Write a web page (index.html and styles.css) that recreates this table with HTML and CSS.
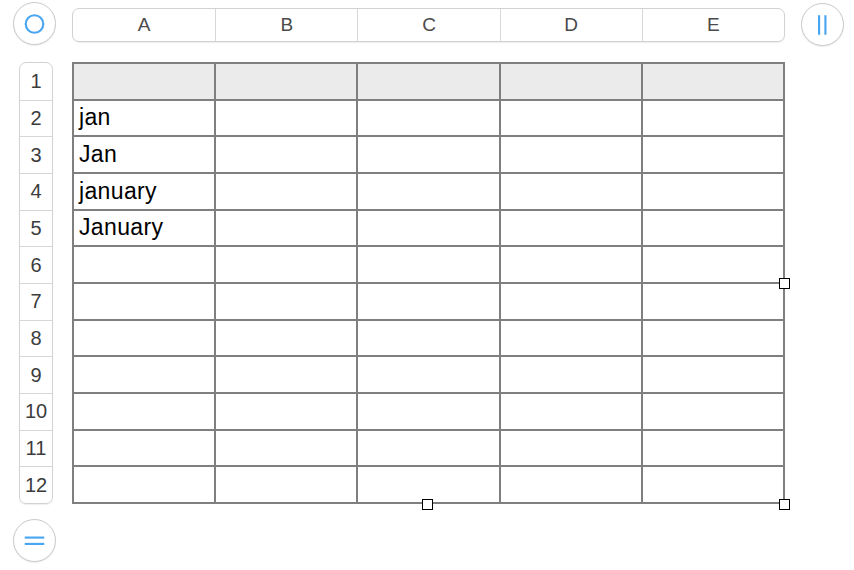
FILE: index.html
```html
<!DOCTYPE html>
<html>
<head>
<meta charset="utf-8">
<link rel="stylesheet" href="styles.css">
</head>
<body>
<div class="page">
  <div class="top">
    <div class="circle-btn">
      <svg width="42" height="42" viewBox="0 0 42 42"><circle cx="21" cy="21" r="9" fill="none" stroke="#4aa6f0" stroke-width="2.2"/></svg>
    </div>
    <div class="col-bar">
      <div class="col-h">A</div>
      <div class="col-h">B</div>
      <div class="col-h">C</div>
      <div class="col-h">D</div>
      <div class="col-h">E</div>
    </div>
    <div class="circle-btn right">
      <svg width="42" height="42" viewBox="0 0 42 42"><line x1="17.5" y1="11" x2="17.5" y2="31" stroke="#4aa6f0" stroke-width="2.2"/><line x1="24" y1="11" x2="24" y2="31" stroke="#4aa6f0" stroke-width="2.2"/></svg>
    </div>
  </div>
  <div class="middle">
    <div class="row-bar">
      <div class="row-h">1</div>
      <div class="row-h">2</div>
      <div class="row-h">3</div>
      <div class="row-h">4</div>
      <div class="row-h">5</div>
      <div class="row-h">6</div>
      <div class="row-h">7</div>
      <div class="row-h">8</div>
      <div class="row-h">9</div>
      <div class="row-h">10</div>
      <div class="row-h">11</div>
      <div class="row-h">12</div>
    </div>
    <div class="sheet-wrap">
      <div class="sheet">
        <div class="cell head"></div><div class="cell head"></div><div class="cell head"></div><div class="cell head"></div><div class="cell head"></div>
        <div class="cell">jan</div><div class="cell"></div><div class="cell"></div><div class="cell"></div><div class="cell"></div>
        <div class="cell">Jan</div><div class="cell"></div><div class="cell"></div><div class="cell"></div><div class="cell"></div>
        <div class="cell">january</div><div class="cell"></div><div class="cell"></div><div class="cell"></div><div class="cell"></div>
        <div class="cell">January</div><div class="cell"></div><div class="cell"></div><div class="cell"></div><div class="cell"></div>
        <div class="cell"></div><div class="cell"></div><div class="cell"></div><div class="cell"></div><div class="cell"></div>
        <div class="cell"></div><div class="cell"></div><div class="cell"></div><div class="cell"></div><div class="cell"></div>
        <div class="cell"></div><div class="cell"></div><div class="cell"></div><div class="cell"></div><div class="cell"></div>
        <div class="cell"></div><div class="cell"></div><div class="cell"></div><div class="cell"></div><div class="cell"></div>
        <div class="cell"></div><div class="cell"></div><div class="cell"></div><div class="cell"></div><div class="cell"></div>
        <div class="cell"></div><div class="cell"></div><div class="cell"></div><div class="cell"></div><div class="cell"></div>
        <div class="cell"></div><div class="cell"></div><div class="cell"></div><div class="cell"></div><div class="cell"></div>
      </div>
      <div class="handle h-right"></div>
      <div class="handle h-bottom"></div>
      <div class="handle h-corner"></div>
    </div>
  </div>
  <div class="bottom">
    <div class="circle-btn">
      <svg width="42" height="42" viewBox="0 0 42 42"><line x1="11" y1="17.5" x2="31" y2="17.5" stroke="#4aa6f0" stroke-width="2.2"/><line x1="11" y1="24" x2="31" y2="24" stroke="#4aa6f0" stroke-width="2.2"/></svg>
    </div>
  </div>
</div>
</body>
</html>
```
FILE: styles.css
```css
* { box-sizing: border-box; }
html, body { margin: 0; padding: 0; background: #fff; }
body { font-family: "Liberation Sans", Arial, sans-serif; width: 854px; height: 570px; overflow: hidden; }

.page { padding: 2px 0 0 13px; }

.top { display: flex; align-items: flex-start; }

.circle-btn {
  width: 43px; height: 43px;
  border-radius: 50%;
  border: 1px solid #c9c9c9;
  box-shadow: 0 1px 1px rgba(0,0,0,0.08);
  background: #fff;
  display: flex; align-items: center; justify-content: center;
  flex: none;
}
.circle-btn svg { display: block; }
.circle-btn.right { margin-left: 16px; margin-top: 1px; }

.col-bar {
  margin-left: 16px;
  margin-top: 6px;
  width: 713px; height: 34px;
  border: 1px solid #d2d2d2;
  border-radius: 7px;
  box-shadow: 0 1px 1px rgba(0,0,0,0.07);
  display: grid;
  grid-template-columns: repeat(5, 1fr);
}
.col-h {
  display: flex; align-items: center; justify-content: center;
  font-size: 19px; color: #4a4a4a;
  border-left: 1px solid #d8d8d8;
}
.col-h:first-child { border-left: none; }

.middle { display: flex; margin-top: 16px; }

.row-bar {
  margin-left: 6px;
  width: 34px; height: 442px;
  border: 1px solid #d2d2d2;
  border-radius: 7px;
  box-shadow: 0 1px 1px rgba(0,0,0,0.07);
  display: grid;
  grid-template-rows: repeat(12, 1fr);
}
.row-h {
  display: flex; align-items: center; justify-content: center;
  font-size: 20px; color: #3c3c3c;
  border-top: 1px solid #d8d8d8;
}
.row-h:first-child { border-top: none; }

.sheet-wrap { position: relative; margin-left: 19px; }
.sheet {
  width: 713px; height: 442px;
  background: #7f7f7f;
  padding: 2px;
  display: grid;
  grid-template-columns: repeat(5, 1fr);
  grid-template-rows: repeat(12, 1fr);
  gap: 2px;
}
.cell {
  background: #fff;
  font-size: 23px;
  letter-spacing: 0.35px;
  color: #000;
  padding-left: 5px;
  display: flex; align-items: center;
  line-height: 1;
}
.cell.head { background: #ebebeb; }

.handle {
  position: absolute;
  width: 11px; height: 11px;
  background: #fff;
  border: 1.5px solid #000;
}
.h-right { left: 707px; top: 216px; }
.h-bottom { left: 350px; top: 437px; }
.h-corner { left: 707px; top: 437px; }

.bottom { margin-top: 15px; }
```
